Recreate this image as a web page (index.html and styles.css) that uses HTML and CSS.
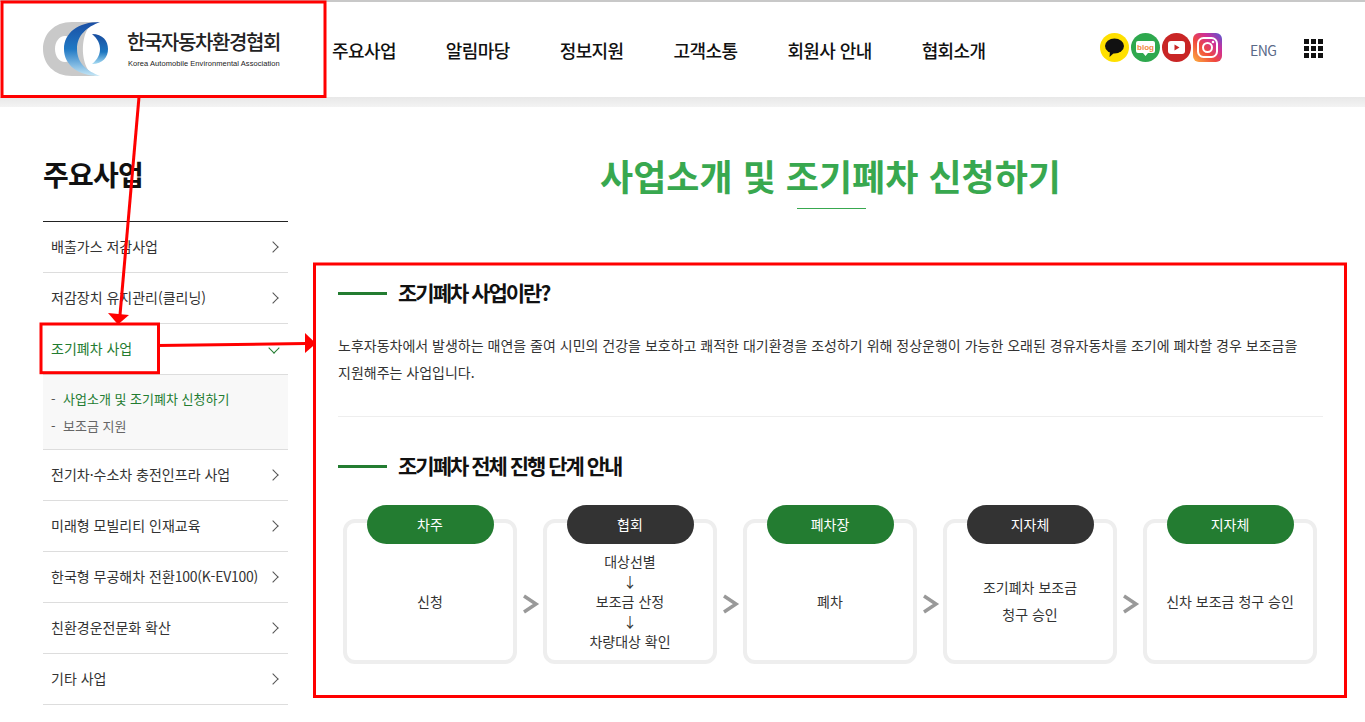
FILE: index.html
```html
<!DOCTYPE html>
<html lang="ko">
<head>
    <meta charset="UTF-8">
    <meta name="viewport" content="width=device-width, initial-scale=1.0">
    <title>사업소개 및 조기폐차 신청하기</title>
    <link rel="stylesheet" href="styles.css">
</head>
<body>
    <header class="header">
        <a class="logo" href="#">
            <svg class="logo-mark" viewBox="43 23 67 54" width="67" height="54">
                <defs>
                    <linearGradient id="ringBlue" x1="0" y1="0" x2="0" y2="1">
                        <stop offset="0" stop-color="#1b4ea3"/>
                        <stop offset="0.5" stop-color="#1f78c4"/>
                        <stop offset="1" stop-color="#c4e6f6"/>
                    </linearGradient>
                    <linearGradient id="innerBlue" x1="0" y1="0" x2="0" y2="1">
                        <stop offset="0" stop-color="#1a4d9f"/>
                        <stop offset="0.6" stop-color="#1c76c0"/>
                        <stop offset="1" stop-color="#a9dcf3"/>
                    </linearGradient>
                </defs>
                <path d="M72 23H98C78 24 78 76 98 77H72C54 77 43 65 43 50S54 23 72 23ZM65 37C59 37 55 43 55 50S59 63 65 63C71 63 75 57 75 50S71 37 65 37Z" fill="#c9c9c9" fill-rule="evenodd"/>
                <path d="M100 23C78 23 64 34 64 50C64 66 78 77 100 77C87 72 77 64 77 50C77 36 87 28 100 23Z" fill="url(#ringBlue)"/>
                <path d="M92 35C103 35 108 42 108 50C108 58 103 65 92 65C98 60 100 55 100 50C100 45 98 40 92 35Z" fill="url(#innerBlue)"/>
            </svg>
            <span class="logo-text">
                <strong>한국자동차환경협회</strong>
                <small>Korea Automobile Environmental Association</small>
            </span>
        </a>
        <nav class="gnb">
            <a href="#">주요사업</a>
            <a href="#">알림마당</a>
            <a href="#">정보지원</a>
            <a href="#">고객소통</a>
            <a href="#">회원사 안내</a>
            <a href="#">협회소개</a>
        </nav>
        <div class="sns">
            <svg viewBox="0 0 29 29" width="29" height="29">
                <circle cx="14.5" cy="14.5" r="14.5" fill="#ffe000"/>
                <ellipse cx="14.5" cy="13" rx="9.5" ry="7.5" fill="#111"/>
                <path d="M10 18L9.5 24L15 19Z" fill="#111"/>
            </svg>
            <svg viewBox="0 0 29 29" width="29" height="29">
                <circle cx="14.5" cy="14.5" r="14.5" fill="#2ea84e"/>
                <path d="M7 8H22Q24 8 24 10V18Q24 20 22 20H17L14.5 23L12 20H7Q5 20 5 18V10Q5 8 7 8Z" fill="#fff"/>
                <text x="14.5" y="16.5" class="blog-text">blog</text>
            </svg>
            <svg viewBox="0 0 29 29" width="29" height="29">
                <circle cx="14.5" cy="14.5" r="14.5" fill="#c92525"/>
                <rect x="6" y="8" width="17" height="13" rx="3" fill="#fff"/>
                <path d="M12.5 11.5L17.5 14.5L12.5 17.5Z" fill="#c92525"/>
            </svg>
            <svg viewBox="0 0 29 29" width="29" height="29">
                <defs>
                    <linearGradient id="instaBg" x1="0" y1="1" x2="1" y2="0">
                        <stop offset="0" stop-color="#fdb33f"/>
                        <stop offset="0.4" stop-color="#f0483e"/>
                        <stop offset="0.7" stop-color="#cc2f9b"/>
                        <stop offset="1" stop-color="#4f5bd5"/>
                    </linearGradient>
                </defs>
                <rect width="29" height="29" rx="6" fill="url(#instaBg)"/>
                <rect x="5" y="5" width="19" height="19" rx="5.5" fill="none" stroke="#fff" stroke-width="2"/>
                <circle cx="14.5" cy="14.5" r="4.5" fill="none" stroke="#fff" stroke-width="2"/>
                <circle cx="20" cy="9" r="1.3" fill="#fff"/>
            </svg>
        </div>
        <a class="lang" href="#">ENG</a>
        <div class="all-menu">
            <i></i><i></i><i></i><i></i><i></i><i></i><i></i><i></i><i></i>
        </div>
    </header>
    <div class="header-shade"></div>

    <div class="wrap">
        <aside class="side">
            <h2>주요사업</h2>
            <ul class="side-menu">
                <li class="side-item">배출가스 저감사업<span class="chev"></span></li>
                <li class="side-item">저감장치 유지관리(클리닝)<span class="chev"></span></li>
                <li class="side-item on">조기폐차 사업<span class="chev"></span></li>
                <li class="side-sub">
                    <a class="on" href="#">사업소개 및 조기폐차 신청하기</a>
                    <a href="#">보조금 지원</a>
                </li>
                <li class="side-item">전기차·수소차 충전인프라 사업<span class="chev"></span></li>
                <li class="side-item">미래형 모빌리티 인재교육<span class="chev"></span></li>
                <li class="side-item"><span>한국형 무공해차 전환<span class="latin">100(K-EV100)</span></span><span class="chev"></span></li>
                <li class="side-item">친환경운전문화 확산<span class="chev"></span></li>
                <li class="side-item">기타 사업<span class="chev"></span></li>
            </ul>
        </aside>

        <main class="content">
            <h1>사업소개 및 조기폐차 신청하기</h1>
            <div class="title-line"></div>

            <h3 class="sec-title first">조기폐차 사업이란?</h3>
            <p class="intro">노후자동차에서 발생하는 매연을 줄여 시민의 건강을 보호하고 쾌적한 대기환경을 조성하기 위해 정상운행이 가능한 오래된 경유자동차를 조기에 폐차할 경우 보조금을 지원해주는 사업입니다.</p>
            <hr class="divider">

            <h3 class="sec-title">조기폐차 전체 진행 단계 안내</h3>
            <div class="steps">
                <div class="step">
                    <span class="pill">차주</span>
                    <div class="step-body">신청</div>
                </div>
                <svg class="step-arrow" viewBox="0 0 26 20" width="26" height="20"><path d="M7 2L19 10L7 18" /></svg>
                <div class="step">
                    <span class="pill dark">협회</span>
                    <div class="step-body tight">대상선별<br>↓<br>보조금 산정<br>↓<br>차량대상 확인</div>
                </div>
                <svg class="step-arrow" viewBox="0 0 26 20" width="26" height="20"><path d="M7 2L19 10L7 18" /></svg>
                <div class="step">
                    <span class="pill">폐차장</span>
                    <div class="step-body">폐차</div>
                </div>
                <svg class="step-arrow" viewBox="0 0 26 20" width="26" height="20"><path d="M7 2L19 10L7 18" /></svg>
                <div class="step">
                    <span class="pill dark">지자체</span>
                    <div class="step-body">조기폐차 보조금<br>청구 승인</div>
                </div>
                <svg class="step-arrow" viewBox="0 0 26 20" width="26" height="20"><path d="M7 2L19 10L7 18" /></svg>
                <div class="step">
                    <span class="pill">지자체</span>
                    <div class="step-body">신차 보조금 청구 승인</div>
                </div>
            </div>
        </main>
    </div>

    <!-- red callouts drawn over the page -->
    <svg class="callouts" viewBox="0 0 1365 722" width="1365" height="722">
        <g fill="none" stroke="#f00" stroke-width="3">
            <rect x="2" y="2" width="323" height="94.5"/>
            <rect x="41" y="324" width="117.5" height="48.7"/>
            <rect x="314.5" y="264" width="1031" height="432.5"/>
            <path d="M139 97L120 315"/>
            <path d="M158 345.5L306 343.5"/>
        </g>
        <path d="M108 313L129 315L118 324.5Z" fill="#f00"/>
        <path d="M305 333L316 343.5L305 353Z" fill="#f00"/>
    </svg>
</body>
</html>
```

FILE: styles.css
```css
* {
    box-sizing: border-box;
}

html, body {
    margin: 0;
    padding: 0;
    height: 722px;
    overflow: hidden;
}

body {
    position: relative;
    font-family: "Noto Sans CJK KR", "Noto Sans", sans-serif;
    font-size: 14px;
    color: #333;
    background-color: #fff;
}

a {
    color: inherit;
    text-decoration: none;
}

ul {
    margin: 0;
    padding: 0;
    list-style: none;
}

/* header */
.header {
    display: flex;
    align-items: center;
    height: 97px;
    border-top: 2px solid #c8c8c8;
    padding-left: 43px;
}

.logo {
    display: flex;
    align-items: center;
    width: 289px;
    margin-top: -1px;
}

.logo-mark {
    flex: none;
}

.logo-text {
    display: flex;
    flex-direction: column;
    margin-left: 17px;
    color: #222;
}

.logo-text strong {
    font-size: 20px;
    font-weight: 500;
    line-height: 28px;
    letter-spacing: -1.4px;
}

.logo-text small {
    font-family: "Liberation Sans", sans-serif;
    font-size: 7.5px;
    line-height: 12px;
    letter-spacing: 0.06px;
    margin-top: 2px;
    margin-left: 1px;
    white-space: nowrap;
}

.gnb {
    display: flex;
    gap: 50px;
    width: 768px;
    font-size: 18px;
    font-weight: 500;
    letter-spacing: -0.6px;
    color: #111;
}

.sns {
    display: flex;
    gap: 2px;
    margin-top: -5px;
}

.lang {
    margin-left: 28px;
    font-size: 14px;
    color: #5a6a88;
    letter-spacing: -0.6px;
}

.all-menu {
    display: grid;
    grid-template-columns: repeat(3, 5px);
    gap: 2px;
    margin-left: 28px;
    margin-top: -3px;
}

.all-menu i {
    display: block;
    height: 5px;
    background-color: #111;
}

.blog-text {
    font-family: "Liberation Sans", sans-serif;
    font-size: 8px;
    font-weight: bold;
    text-anchor: middle;
    fill: #f0883e;
}

.header-shade {
    height: 10px;
    background: linear-gradient(#e8e8e8, #f3f3f3);
}

/* layout */
.wrap {
    display: flex;
    padding-left: 43px;
}

.side {
    width: 245px;
    flex: none;
}

.side h2 {
    margin: 0;
    height: 115px;
    padding-top: 47px;
    font-size: 28px;
    font-weight: 700;
    line-height: 40px;
    letter-spacing: -0.8px;
    color: #111;
    border-bottom: 1px solid #222;
}

.side-item {
    display: flex;
    align-items: center;
    justify-content: space-between;
    height: 51px;
    padding: 0 11px 2px 8px;
    border-bottom: 1px solid #ddd;
    white-space: nowrap;
}

.side-item.on {
    color: #237c31;
}

.latin {
    letter-spacing: -0.25px;
}

.chev {
    width: 8px;
    height: 8px;
    margin-top: 2px;
    border-top: 1px solid #555;
    border-right: 1px solid #555;
    transform: rotate(45deg);
}

.side-item.on .chev {
    border-color: #237c31;
    transform: rotate(135deg);
    margin-top: 0;
    margin-right: -1px;
}

.side-sub {
    height: 75px;
    padding: 10px 8px 0;
    background-color: #f8f8f8;
    border-bottom: 1px solid #ddd;
    font-size: 13px;
    color: #666;
}

.side-sub a {
    display: block;
    line-height: 27px;
}

.side-sub a::before {
    content: "-";
    display: inline-block;
    width: 12px;
    color: #555;
}

.side-sub a.on {
    color: #237c31;
}

/* content */
.content {
    width: 985px;
    margin-left: 50px;
}

.content h1 {
    margin: 43px 0 0;
    font-size: 36px;
    font-weight: 700;
    line-height: 50px;
    text-align: center;
    color: #38a84f;
}

.title-line {
    width: 69px;
    height: 1px;
    margin: 8px 0 0 459px;
    background-color: #38a84f;
}

.sec-title {
    display: flex;
    align-items: center;
    gap: 11px;
    margin: 34px 0 0;
    padding-bottom: 2px;
    font-size: 21px;
    font-weight: 700;
    line-height: 28px;
    letter-spacing: -2px;
    color: #111;
}

.sec-title.first {
    margin-top: 69px;
}

.sec-title::before {
    content: "";
    width: 49px;
    height: 3px;
    margin-top: 2px;
    background-color: #237c31;
}

.intro {
    margin: 24px 0 0;
    line-height: 27px;
    color: #333;
    word-break: keep-all;
}

.divider {
    margin: 30px 0 0;
    border: 0;
    border-top: 1px solid #eee;
}

/* steps */
.steps {
    display: flex;
    align-items: center;
    margin: 38px 0 0 5px;
}

.step {
    display: flex;
    flex-direction: column;
    align-items: center;
    width: 174px;
    height: 145px;
    border: 4px solid #eee;
    border-radius: 12px;
    background-color: #fff;
}

.pill {
    flex: none;
    width: 127px;
    height: 39px;
    margin-top: -18px;
    border-radius: 20px;
    background-color: #237c31;
    color: #fff;
    line-height: 38px;
    text-align: center;
}

.pill.dark {
    background-color: #333;
}

.step-body {
    flex: 1;
    display: flex;
    align-items: center;
    padding-bottom: 2px;
    text-align: center;
    line-height: 27px;
}

.step-body.tight {
    line-height: 20px;
}

.step-arrow {
    flex: none;
    margin-top: 24px;
}

.step-arrow path {
    fill: none;
    stroke: #999;
    stroke-width: 3.5;
}

/* callouts */
.callouts {
    position: absolute;
    left: 0;
    top: 0;
    pointer-events: none;
}
```
